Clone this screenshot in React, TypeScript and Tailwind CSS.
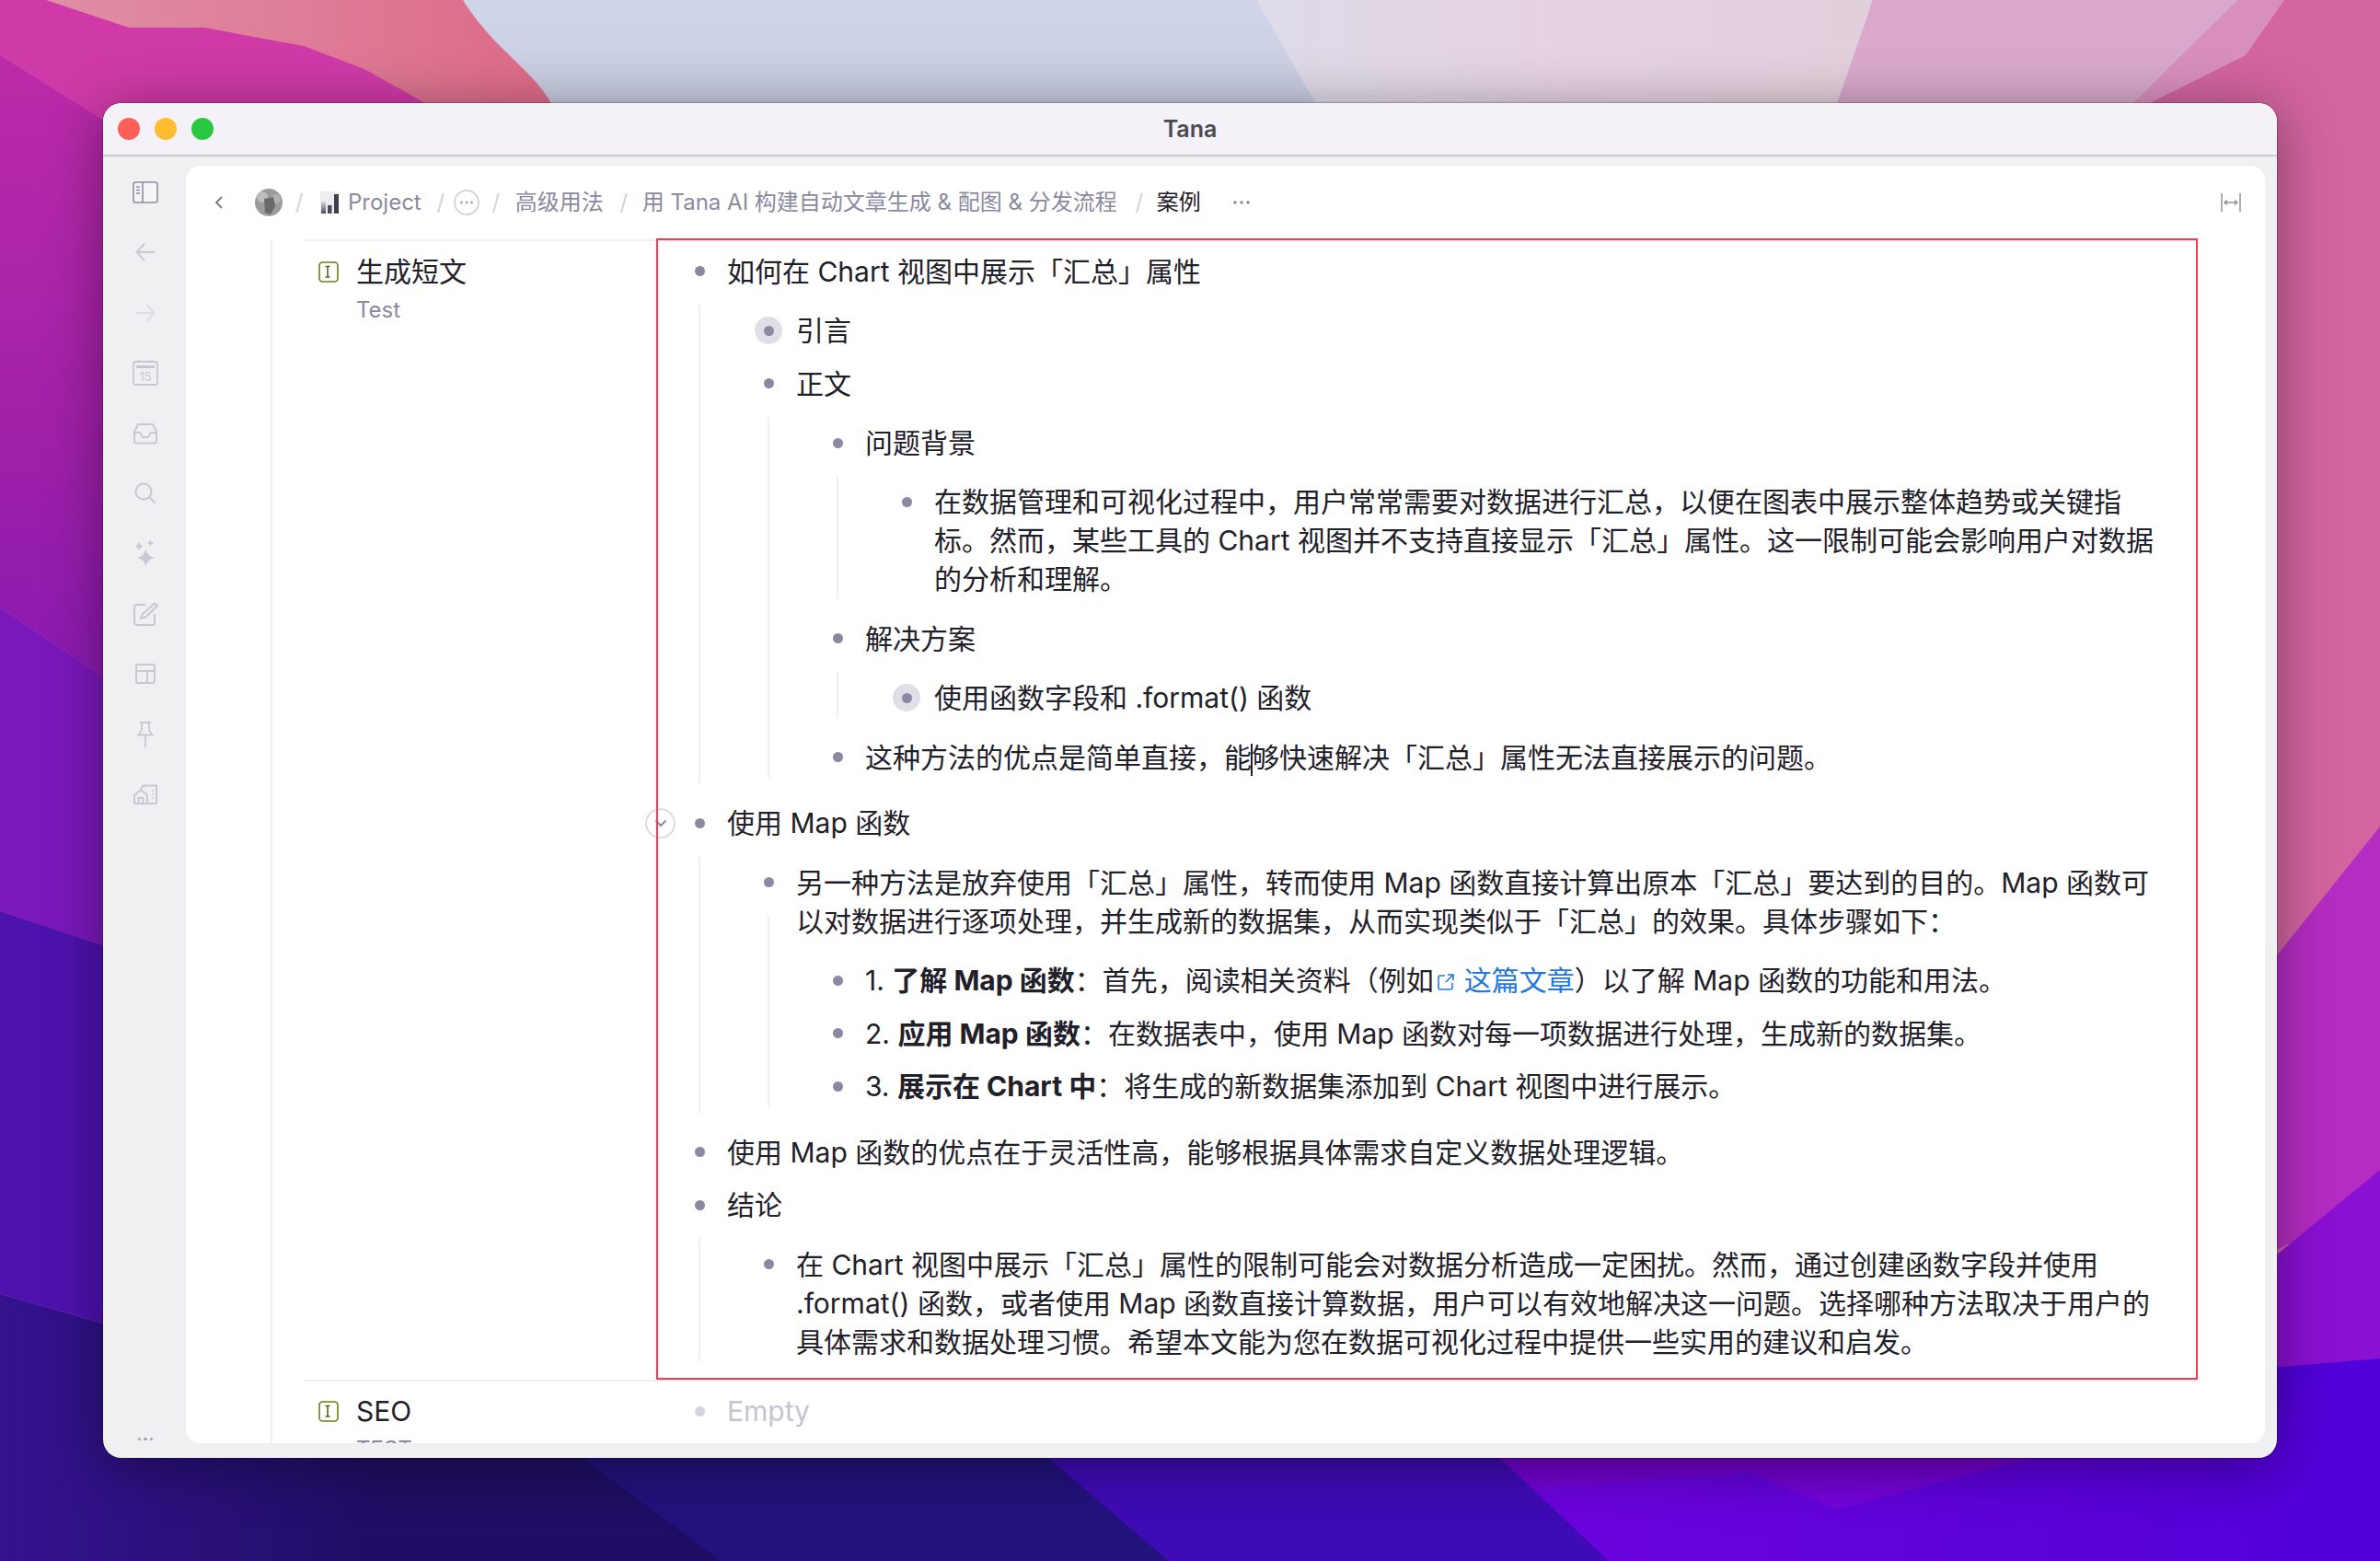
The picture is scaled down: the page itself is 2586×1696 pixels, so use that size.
import React from 'react';

type TreeNode = {
  lines: React.ReactNode[];
  halo?: boolean;
  toggle?: boolean;
  children?: TreeNode[];
};

const Wallpaper = () => (
  <svg className="absolute inset-0 h-full w-full" viewBox="0 0 2586 1696" preserveAspectRatio="none">
    <defs>
      <linearGradient id="center" x1="0" y1="0" x2="0" y2="1">
        <stop offset="0" stopColor="#d0d6e9" />
        <stop offset="1" stopColor="#c6c9de" />
      </linearGradient>
      <linearGradient id="coral" x1="0" y1="0" x2="1" y2="0">
        <stop offset="0" stopColor="#e08ea6" />
        <stop offset="1" stopColor="#dd6a88" />
      </linearGradient>
      <linearGradient id="white" x1="0" y1="0" x2="1" y2="0">
        <stop offset="0" stopColor="#dedbe8" />
        <stop offset="0.5" stopColor="#e6d2e2" />
        <stop offset="1" stopColor="#e2cfdc" />
      </linearGradient>
      <linearGradient id="purple" x1="0" y1="0" x2="0" y2="1">
        <stop offset="0" stopColor="#6400a8" />
        <stop offset="1" stopColor="#7404dc" />
      </linearGradient>
      <linearGradient id="violet" x1="0" y1="0" x2="1" y2="0">
        <stop offset="0" stopColor="#7004dc" />
        <stop offset="1" stopColor="#5000d8" />
      </linearGradient>
      <linearGradient id="deep" gradientUnits="userSpaceOnUse" x1="0" y1="0" x2="420" y2="0">
        <stop offset="0" stopColor="#341290" />
        <stop offset="1" stopColor="#1f0e63" />
      </linearGradient>
      <linearGradient id="magenta" gradientUnits="userSpaceOnUse" x1="0" y1="60" x2="0" y2="735">
        <stop offset="0" stopColor="#bc2ba9" />
        <stop offset="0.6" stopColor="#a020a8" />
        <stop offset="1" stopColor="#8a1ab0" />
      </linearGradient>
    </defs>
    <rect width="2586" height="1696" fill="#d2649f" />
    {/* left side bands */}
    <polygon points="0,0 400,0 462,112 400,130 112,130 0,60" fill="#cf3aa8" />
    <polygon points="0,60 112,130 500,180 500,800 112,735 0,660" fill="url(#magenta)" />
    <polygon points="0,660 112,735 500,900 500,1100 112,1027 0,990" fill="#7a18bb" />
    <polygon points="0,990 112,1027 500,1100 500,1500 112,1438 0,1406" fill="#4d12ae" />
    <polygon points="0,1406 112,1438 783,1500 783,1696 0,1696" fill="url(#deep)" />
    {/* top shapes */}
    <polygon points="50,0 503,0 605,112 605,130 462,112 396,75 330,50 222,30 140,30" fill="url(#coral)" />
    <path d="M503 0 C540 60 590 80 607 130 L1450 130 L1365 0 Z" fill="url(#center)" />
    <polygon points="1365,0 2035,0 1995,130 1440,130" fill="url(#white)" />
    <polygon points="2035,0 2432,0 2300,130 1990,130" fill="#d9a8cc" />
    <polygon points="2432,0 2482,0 2440,60 2300,130" fill="#d88fbe" />
    {/* right side bands */}
    <polygon points="2474,1038 2586,898 2586,1300 2200,1500 2200,1100" fill="#b42cc2" />
    <polygon points="2474,1363 2586,1271 2586,1480 2300,1520" fill="#8a10d2" />
    <polygon points="2300,1500 2586,1476 2586,1696 2100,1696" fill="#5000d8" />
    {/* bottom strips */}
    <polygon points="1500,1500 2586,1500 2586,1696 1748,1696" fill="url(#violet)" />
    <polygon points="1500,1500 2300,1500 2210,1584 1995,1640 1900,1600 1640,1620" fill="url(#purple)" />
    <polygon points="1000,1500 1540,1500 1748,1696 1270,1696" fill="#3e0bb4" />
    <polygon points="520,1500 1040,1500 1270,1696 783,1696" fill="#22127c" />
  </svg>
);

const TextCursorBox = () => (
  <svg width="24" height="24" viewBox="0 0 24 24" fill="none" className="shrink-0">
    <rect x="2" y="2" width="20" height="21" rx="3.5" stroke="#6e7e14" strokeWidth="1.6" />
    <path d="M8.5 6.500h5M8.5 18h5M11 6.500V18" stroke="#5c6418" strokeWidth="1.6" />
  </svg>
);

const Slash = () => <span className="w-[10px] shrink-0 text-center text-[#d4d3dd]">/</span>;

const ChartEmoji = () => (
  <svg width="20" height="24" viewBox="0 0 20 24" className="shrink-0">
    <defs>
      <linearGradient id="bar" x1="0" y1="0" x2="0" y2="1">
        <stop offset="0" stopColor="#d9d9e0" />
        <stop offset="1" stopColor="#4a4a55" />
      </linearGradient>
    </defs>
    <rect x="0" y="0" width="20" height="24" fill="#eeeef2" />
    <rect x="1" y="11" width="5" height="13" fill="url(#bar)" />
    <rect x="8" y="15" width="4.500" height="9" fill="#4c4c58" />
    <rect x="15" y="3" width="5" height="21" fill="#3f3f4a" />
  </svg>
);

const Avatar = () => (
  <svg width="30" height="30" viewBox="0 0 30 30" className="shrink-0">
    <circle cx="15" cy="15" r="15" fill="#9b9b9b" />
    <circle cx="8" cy="9" r="6" fill="#bdbdbd" />
    <circle cx="23" cy="11" r="5" fill="#b0b0b0" />
    <path d="M10 11 L20 9 L22 19 L17 28 L11 26 Z" fill="#6a6a6a" />
  </svg>
);

const iconStroke = '#c8c7d4';

// four pointed star used by the AI icon
const star = (cx: number, cy: number, r: number) => {
  const k = r * 0.16;
  return `M${cx} ${cy - r}Q${cx + k} ${cy - k} ${cx + r} ${cy}Q${cx + k} ${cy + k} ${cx} ${cy + r}Q${cx - k} ${cy + k} ${cx - r} ${cy}Q${cx - k} ${cy - k} ${cx} ${cy - r}Z`;
};

const SidebarItem = ({ children }: { children: React.ReactNode }) => (
  <div className="flex h-[65.4px] shrink-0 items-center justify-center">{children}</div>
);

const SidebarIcons = () => (
  <div className="flex h-full w-[90px] shrink-0 flex-col items-center pl-[2px] pt-[6.400px]">
    <SidebarItem>
      <svg width="28" height="24" viewBox="0 0 28 24" fill="none" stroke="#8d8ca1" strokeWidth="1.6">
        <rect x="1" y="1" width="26" height="22" rx="2.500" fill="#f5f5f8" />
        <path d="M11 1v22M4 6h4M4 9.500h4M4 13h4" />
      </svg>
    </SidebarItem>
    <SidebarItem>
      <svg width="24" height="24" viewBox="0 0 24 24" fill="none" stroke={iconStroke} strokeWidth="2">
        <path d="M22 12H3M11 3l-8.500 9 8.500 9" />
      </svg>
    </SidebarItem>
    <SidebarItem>
      <svg width="24" height="24" viewBox="0 0 24 24" fill="none" stroke="#dddce5" strokeWidth="2">
        <path d="M2 12h19M13 3l8.500 9-8.500 9" />
      </svg>
    </SidebarItem>
    <SidebarItem>
      <svg width="28" height="28" viewBox="0 0 28 28" fill="none" stroke={iconStroke} strokeWidth="1.8">
        <rect x="1" y="2" width="26" height="25" rx="2.500" />
        <path d="M4 7.500h20" strokeWidth="3" />
        <path d="M7 0v2M21 0v2" />
        <text x="14" y="23" textAnchor="middle" fontSize="13" fill={iconStroke} stroke="none" fontFamily="Inter">15</text>
      </svg>
    </SidebarItem>
    <SidebarItem>
      <svg width="26" height="24" viewBox="0 0 26 24" fill="none" stroke={iconStroke} strokeWidth="2">
        <path d="M5 2h16l4 8v10a2.500 2.500 0 0 1-2.500 2.500h-19A2.500 2.500 0 0 1 1 20V10z" />
        <path d="M1 11h6l3 5h6l3-5h6" />
      </svg>
    </SidebarItem>
    <SidebarItem>
      <svg width="24" height="24" viewBox="0 0 24 24" fill="none" stroke={iconStroke} strokeWidth="2">
        <circle cx="10" cy="10" r="8.500" />
        <path d="M16.500 16.500l6 6" />
      </svg>
    </SidebarItem>
    <SidebarItem>
      <svg width="24" height="30" viewBox="0 0 24 30" fill={iconStroke}>
        <path d={star(12.5, 20, 9.5)} />
        <path d={star(5, 7.5, 5)} />
        <path d={star(17.5, 4, 3.5)} />
      </svg>
    </SidebarItem>
    <SidebarItem>
      <svg width="27" height="26" viewBox="0 0 27 26" fill="none" stroke={iconStroke} strokeWidth="2">
        <path d="M13 3H3.500A2.500 2.500 0 0 0 1 5.500v17A2.500 2.500 0 0 0 3.500 25h17a2.500 2.500 0 0 0 2.500-2.500V13" />
        <path d="M23 1.500l3 2.500L13 16.500l-5 1.500 1.500-4.500z" />
      </svg>
    </SidebarItem>
    <SidebarItem>
      <svg width="22" height="22" viewBox="0 0 22 22" fill="none" stroke={iconStroke} strokeWidth="2">
        <rect x="1" y="1" width="20" height="20" rx="2" />
        <path d="M1 8h20M13 8v13" />
      </svg>
    </SidebarItem>
    <SidebarItem>
      <svg width="18" height="28" viewBox="0 0 18 28" fill="none" stroke={iconStroke} strokeWidth="1.8">
        <path d="M3 1h12M5 1v8l-3.500 5.500h15L13 9V1M9 15v13" />
      </svg>
    </SidebarItem>
    <SidebarItem>
      <svg width="26" height="22" viewBox="0 0 26 22" fill="none" stroke={iconStroke} strokeWidth="2">
        <path d="M1 21v-9l7-6 7 6v9M1 21h24M5.500 21v-6h5v6" />
        <path d="M8 5l3-3.500h14V21" />
        <path d="M20 7h1.500M20 11h1.500M20 15h1.500" />
      </svg>
    </SidebarItem>
    <div className="mb-[19px] mt-auto flex gap-[3px]">
      <span className="h-[3.500px] w-[3.500px] rounded-full bg-[#a3a2b6]" />
      <span className="h-[3.500px] w-[3.500px] rounded-full bg-[#a3a2b6]" />
      <span className="h-[3.500px] w-[3.500px] rounded-full bg-[#a3a2b6]" />
    </div>
  </div>
);

const Breadcrumb = () => (
  <div className="flex h-[80px] shrink-0 items-center pl-[31px] pr-[26px] text-[24px] text-[#8a8aa0]">
    <svg width="10" height="16" viewBox="0 0 10 16" fill="none" stroke="#77758a" strokeWidth="1.8" className="shrink-0">
      <path d="M8 2L2 8l6 6" />
    </svg>
    <div className="ml-[34px]"><Avatar /></div>
    <div className="ml-[13px] flex"><Slash /></div>
    <div className="ml-[18px]"><ChartEmoji /></div>
    <span className="ml-[10px]">Project</span>
    <div className="ml-[16px] flex"><Slash /></div>
    <svg width="28" height="28" viewBox="0 0 28 28" fill="none" className="ml-[9px] shrink-0">
      <circle cx="14" cy="14" r="13" stroke="#cccbd8" strokeWidth="1.6" />
      <circle cx="8.500" cy="14" r="1.500" fill="#a9a8bb" />
      <circle cx="14" cy="14" r="1.500" fill="#a9a8bb" />
      <circle cx="19.500" cy="14" r="1.500" fill="#a9a8bb" />
    </svg>
    <div className="ml-[13px] flex"><Slash /></div>
    <span className="ml-[16px]">高级用法</span>
    <div className="ml-[17px] flex"><Slash /></div>
    <span className="ml-[15px]">用 Tana AI 构建自动文章生成 & 配图 & 分发流程</span>
    <div className="ml-[19px] flex"><Slash /></div>
    <span className="ml-[14px] text-[#1f2029]">案例</span>
    <svg width="20" height="6" viewBox="0 0 20 6" className="ml-[34px] shrink-0" fill="#85849a">
      <circle cx="3" cy="3" r="1.700" />
      <circle cx="10" cy="3" r="1.700" />
      <circle cx="17" cy="3" r="1.700" />
    </svg>
    <svg width="22" height="20" viewBox="0 0 22 20" fill="none" stroke="#929296" strokeWidth="1.500" className="ml-auto shrink-0">
      <path d="M1 0v20M21 0v20" />
      <path d="M4 10h14M7 7.500L4 10l3 2.500M15 7.500l3 2.500-3 2.500" />
    </svg>
  </div>
);

const ExternalLinkIcon = () => (
  <svg width="20" height="20" viewBox="0 0 20 20" fill="none" stroke="#2478dc" strokeWidth="1.600" className="ml-[3px] mr-[10px] inline-block align-[-1px]">
    <path d="M9 3H4a2 2 0 0 0-2 2v11a2 2 0 0 0 2 2h11a2 2 0 0 0 2-2v-5" />
    <path d="M12 2h6v6M18 2l-8 8" />
  </svg>
);

const Caret = () => <span className="mx-[-1px] inline-block h-[35px] w-[2px] bg-[#1f2029] align-middle" />;

// full width punctuation, written as escapes so it stays full width
const C = '\uFF0C';
const K = '\uFF1A';
const L = '\uFF08';
const R = '\uFF09';

const tree: TreeNode[] = [
  {
    lines: ['如何在 Chart 视图中展示「汇总」属性'],
    children: [
      { lines: ['引言'], halo: true },
      {
        lines: ['正文'],
        children: [
          {
            lines: ['问题背景'],
            children: [
              {
                lines: [
                  `在数据管理和可视化过程中${C}用户常常需要对数据进行汇总${C}以便在图表中展示整体趋势或关键指`,
                  `标。然而${C}某些工具的 Chart 视图并不支持直接显示「汇总」属性。这一限制可能会影响用户对数据`,
                  '的分析和理解。',
                ],
              },
            ],
          },
          {
            lines: ['解决方案'],
            children: [{ lines: ['使用函数字段和 .format() 函数'], halo: true }],
          },
          {
            lines: [
              <>
                {`这种方法的优点是简单直接${C}能`}
                <Caret />
                够快速解决「汇总」属性无法直接展示的问题。
              </>,
            ],
          },
        ],
      },
    ],
  },
  {
    lines: ['使用 Map 函数'],
    toggle: true,
    children: [
      {
        lines: [
          `另一种方法是放弃使用「汇总」属性${C}转而使用 Map 函数直接计算出原本「汇总」要达到的目的。Map 函数可`,
          `以对数据进行逐项处理${C}并生成新的数据集${C}从而实现类似于「汇总」的效果。具体步骤如下${K}`,
        ],
        children: [
          {
            lines: [
              <>
                1. <b className="font-bold">了解 Map 函数</b>
                {`${K}首先${C}阅读相关资料${L}例如`}
                <ExternalLinkIcon />
                <span className="text-[#2478dc]">这篇文章</span>
                {`${R}以了解 Map 函数的功能和用法。`}
              </>,
            ],
          },
          {
            lines: [
              <>
                2. <b className="font-bold">应用 Map 函数</b>
                {`${K}在数据表中${C}使用 Map 函数对每一项数据进行处理${C}生成新的数据集。`}
              </>,
            ],
          },
          {
            lines: [
              <>
                3. <b className="font-bold">展示在 Chart 中</b>
                {`${K}将生成的新数据集添加到 Chart 视图中进行展示。`}
              </>,
            ],
          },
        ],
      },
    ],
  },
  { lines: [`使用 Map 函数的优点在于灵活性高${C}能够根据具体需求自定义数据处理逻辑。`] },
  {
    lines: ['结论'],
    children: [
      {
        lines: [
          `在 Chart 视图中展示「汇总」属性的限制可能会对数据分析造成一定困扰。然而${C}通过创建函数字段并使用`,
          `.format() 函数${C}或者使用 Map 函数直接计算数据${C}用户可以有效地解决这一问题。选择哪种方法取决于用户的`,
          '具体需求和数据处理习惯。希望本文能为您在数据可视化过程中提供一些实用的建议和启发。',
        ],
      },
    ],
  },
];

const Bullet = ({ halo, light }: { halo?: boolean; light?: boolean }) => (
  <span className={`flex h-[30px] w-[30px] shrink-0 items-center justify-center rounded-full ${halo ? 'bg-[#e0dfe7]' : ''}`}>
    <span className={`h-[11px] w-[11px] rounded-full ${light ? 'bg-[#d6d5df]' : 'bg-[#8a88a3]'}`} />
  </span>
);

const Row = ({ node }: { node: TreeNode }) => (
  <div className="relative">
    <div className="relative flex gap-[15px] py-[7.7px]">
      {node.toggle && (
        <span className="absolute left-[-44px] top-[12px] flex h-[33px] w-[33px] items-center justify-center rounded-full border-2 border-[#dddce6] bg-white">
          <svg width="14" height="9" viewBox="0 0 14 9" fill="none" stroke="#8a88a3" strokeWidth="2">
            <path d="M1.500 1.500L7 7l5.500-5.500" />
          </svg>
        </span>
      )}
      <span className="flex h-[42px] items-center">
        <Bullet halo={node.halo} />
      </span>
      <div className="whitespace-nowrap">
        {node.lines.map((line, i) => (
          <div key={i}>{line}</div>
        ))}
      </div>
    </div>
    {node.children && (
      <>
        <span className="absolute bottom-[14px] left-[14px] top-[65px] w-[2px] bg-[#f0f0f3]" />
        <div className="ml-[75px] py-[7.1px]">
          {node.children.map((child, i) => (
            <Row key={i} node={child} />
          ))}
        </div>
      </>
    )}
  </div>
);

const Outline = () => (
  <div className="ml-[92px] flex min-h-0 flex-1 flex-col overflow-hidden border-l-2 border-[#f0f0f3] pl-[35px] pr-[74px]">
    <section className="flex border-t-2 border-[#f0f0f3] pb-[6px] pt-[4px]">
      <div className="flex w-[414px] shrink-0 flex-col pl-[14px] pt-[8px]">
        <div className="flex items-center gap-[18px]">
          <TextCursorBox />
          <span className="text-[#1f2029]">生成短文</span>
        </div>
        <span className="ml-[42px] text-[24px] text-[#8a88a3]">Test</span>
      </div>
      <div className="min-w-0 flex-1">
        {tree.map((node, i) => (
          <Row key={i} node={node} />
        ))}
      </div>
    </section>
    <section className="flex border-t-2 border-[#f0f0f3] pt-[3px]">
      <div className="flex w-[414px] shrink-0 flex-col pl-[14px] pt-[8px]">
        <div className="flex items-center gap-[18px]">
          <TextCursorBox />
          <span className="text-[#1f2029]">SEO</span>
        </div>
        <span className="ml-[42px] text-[24px] text-[#8a88a3]">TEST</span>
      </div>
      <div className="flex gap-[15px] py-[7.7px] text-[#c5c4d3]">
        <span className="flex h-[42px] items-center">
          <Bullet light />
        </span>
        <span>Empty</span>
      </div>
    </section>
  </div>
);

const App: React.FC = () => {
  return (
    <div className="relative h-[1696px] w-[2586px] overflow-hidden font-['Inter','Noto_Sans_CJK_SC',sans-serif] text-[30px] leading-[42px] text-[#1f2029]">
      <Wallpaper />

      {/* Window */}
      <div className="absolute left-[112px] top-[112px] flex h-[1472px] w-[2362px] flex-col overflow-hidden rounded-[20px] bg-[#f0f0f3] shadow-[0_0_0_1px_rgba(0,0,0,0.2),0_8px_60px_rgba(0,0,0,0.4)]">
        <div className="grid h-[58px] shrink-0 grid-cols-[1fr_auto_1fr] items-center border-b-2 border-[#cbcbce] bg-[#f5f1f9]">
          <div className="flex gap-[16px] pl-[16px]">
            <span className="h-[24px] w-[24px] rounded-full bg-[#ff5f57]" />
            <span className="h-[24px] w-[24px] rounded-full bg-[#febc2e]" />
            <span className="h-[24px] w-[24px] rounded-full bg-[#28c840]" />
          </div>
          <span className="text-[25px] font-semibold text-[#4a4a50]">Tana</span>
          <div />
        </div>
        <div className="flex min-h-0 flex-1">
          <SidebarIcons />
          <main className="mb-[16px] mr-[13px] mt-[10px] flex min-w-0 flex-1 flex-col overflow-hidden rounded-[16px] bg-white">
            <Breadcrumb />
            <Outline />
          </main>
        </div>
      </div>

      {/* Red annotation frame */}
      <div className="absolute left-[713px] top-[259px] h-[1240px] w-[1675px] border-[2.5px] border-[#f9384e]" />
    </div>
  );
};

export default App;
